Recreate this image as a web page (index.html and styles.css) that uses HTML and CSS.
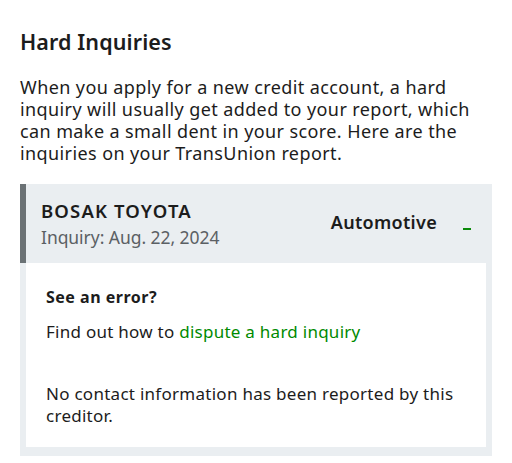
FILE: index.html
```html
<!DOCTYPE html>
<html lang="en">
<head>
<meta charset="utf-8">
<link rel="stylesheet" href="styles.css">
</head>
<body>
<section class="inquiries">
  <h1 class="title">Hard Inquiries</h1>
  <p class="intro">When you apply for a new credit account, a hard inquiry will usually get added to your report, which can make a small dent in your score. Here are the inquiries on your TransUnion report.</p>
  <div class="card">
    <div class="card-head">
      <div class="creditor">
        <div class="name">BOSAK TOYOTA</div>
        <div class="date">Inquiry: Aug. 22, 2024</div>
      </div>
      <div class="meta">
        <span class="type">Automotive</span>
        <span class="dash"></span>
      </div>
    </div>
    <div class="card-body">
      <div class="panel">
        <h2 class="panel-title">See an error?</h2>
        <p class="panel-text">Find out how to <a class="link" href="#">dispute a hard inquiry</a></p>
        <p class="panel-note">No contact information has been reported by this creditor.</p>
      </div>
    </div>
  </div>
</section>
</body>
</html>
```

FILE: styles.css
```css
html, body {
  margin: 0;
  padding: 0;
  background: #ffffff;
}
body {
  font-family: "Noto Sans", "Open Sans", sans-serif;
  color: #1c1c1c;
}
.inquiries {
  padding: 26px 20px 0 20px;
}
.title {
  margin: 0;
  font-size: 21.5px;
  line-height: 32px;
  font-weight: 600;
  letter-spacing: 0.1px;
}
.intro {
  margin: 18px 0 0 0;
  font-size: 18px;
  line-height: 22px;
  font-weight: 400;
  letter-spacing: 0.4px;
}
.card {
  margin-top: 20px;
  background: #eaeef1;
}
.card-head {
  display: flex;
  align-items: center;
  justify-content: space-between;
  border-left: 6px solid #6b7275;
  height: 79px;
  box-sizing: border-box;
  padding: 0 21px 0 15px;
}
.name {
  font-size: 18.5px;
  line-height: 27px;
  font-weight: 600;
  letter-spacing: 1.15px;
}
.date {
  font-size: 17.5px;
  line-height: 27px;
  color: #5b6064;
  letter-spacing: -0.05px;
}
.meta {
  display: flex;
  align-items: flex-start;
  gap: 26px;
}
.type {
  font-size: 18px;
  font-weight: 600;
  line-height: 24px;
  letter-spacing: 0.3px;
  margin-bottom: 4px;
}
.dash {
  display: block;
  width: 8px;
  height: 2px;
  background: #0a8a0a;
  margin-top: 18px;
}
.card-body {
  padding: 0 6px 9px 6px;
}
.panel {
  background: #ffffff;
  padding: 24px 20px 20px 20px;
}
.panel-title {
  margin: 0;
  font-size: 16px;
  line-height: 20px;
  font-weight: 700;
  letter-spacing: 0.5px;
}
.panel-text {
  margin: 14px 0 0 0;
  font-size: 17px;
  line-height: 22px;
  letter-spacing: 0.26px;
}
.link {
  color: #008a00;
  text-decoration: none;
}
.panel-note {
  margin: 40px 0 0 0;
  font-size: 17px;
  line-height: 22px;
  letter-spacing: 0.27px;
}
```
